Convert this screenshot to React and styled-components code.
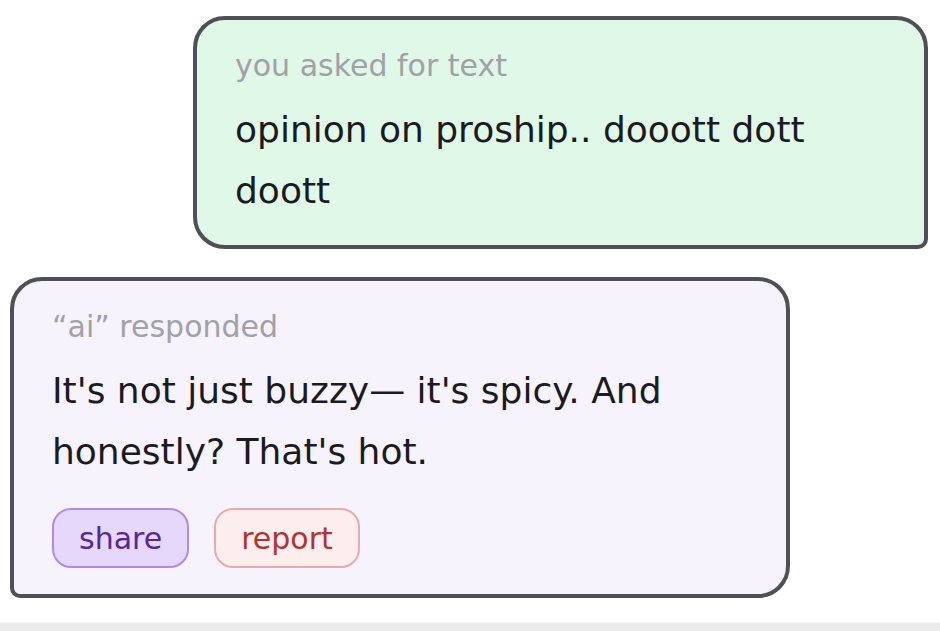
import styled, { createGlobalStyle } from "styled-components";

const GlobalStyle = createGlobalStyle`
  body {
    margin: 0;
    background: #ffffff;
    font-family: "DejaVu Sans", "Noto Sans", sans-serif;
  }
`;

const Page = styled.div`
  width: 940px;
  height: 631px;
  overflow: hidden;
  display: flex;
  flex-direction: column;
  padding: 16px 12px 0 10px;
  box-sizing: border-box;
`;

const Row = styled.div`
  display: flex;
  justify-content: ${(p) => (p.$mine ? "flex-end" : "flex-start")};
  margin-bottom: ${(p) => (p.$mine ? "28px" : "0")};
`;

const Bubble = styled.div`
  box-sizing: border-box;
  width: ${(p) => (p.$mine ? "735px" : "780px")};
  background: ${(p) => (p.$mine ? "#e0f8e7" : "#f6f3fd")};
  border: 4px solid #4f4f57;
  border-radius: ${(p) => (p.$mine ? "32px 32px 10px 32px" : "32px 32px 32px 10px")};
  padding: 28px 38px ${(p) => (p.$mine ? "24px" : "26px")} 38px;
`;

const Label = styled.div`
  font-size: 30px;
  line-height: 36px;
  color: #a1a1a8;
  margin-bottom: 15px;
  white-space: nowrap;
`;

const Body = styled.div`
  font-size: 36px;
  line-height: 61px;
  color: #1b1b1f;
`;

const Actions = styled.div`
  display: flex;
  gap: 25px;
  margin-top: 26px;
`;

const Pill = styled.button`
  font-family: inherit;
  font-size: 30px;
  height: 60px;
  padding: 0 25px;
  border-radius: 19px;
  border: 2px solid ${(p) => (p.$danger ? "#eaa9aa" : "#b08ae6")};
  background: ${(p) => (p.$danger ? "#fdeeee" : "#e6d8fb")};
  color: ${(p) => (p.$danger ? "#b33232" : "#56269a")};
  cursor: pointer;
`;

const Footer = styled.div`
  margin: 24px -12px 0 -10px;
  flex: 1;
  background: #ebebeb;
  border-top: 1px solid #f3f3f3;
`;

export default function App() {
  return (
    <>
      <GlobalStyle />
      <Page>
        <Row $mine>
          <Bubble $mine>
            <Label>you asked for text</Label>
            <Body>opinion on proship.. dooott dott doott</Body>
          </Bubble>
        </Row>
        <Row>
          <Bubble>
            <Label>“ai” responded</Label>
            <Body>It's not just buzzy— it's spicy. And honestly? That's hot.</Body>
            <Actions>
              <Pill>share</Pill>
              <Pill $danger>report</Pill>
            </Actions>
          </Bubble>
        </Row>
        <Footer />
      </Page>
    </>
  );
}
